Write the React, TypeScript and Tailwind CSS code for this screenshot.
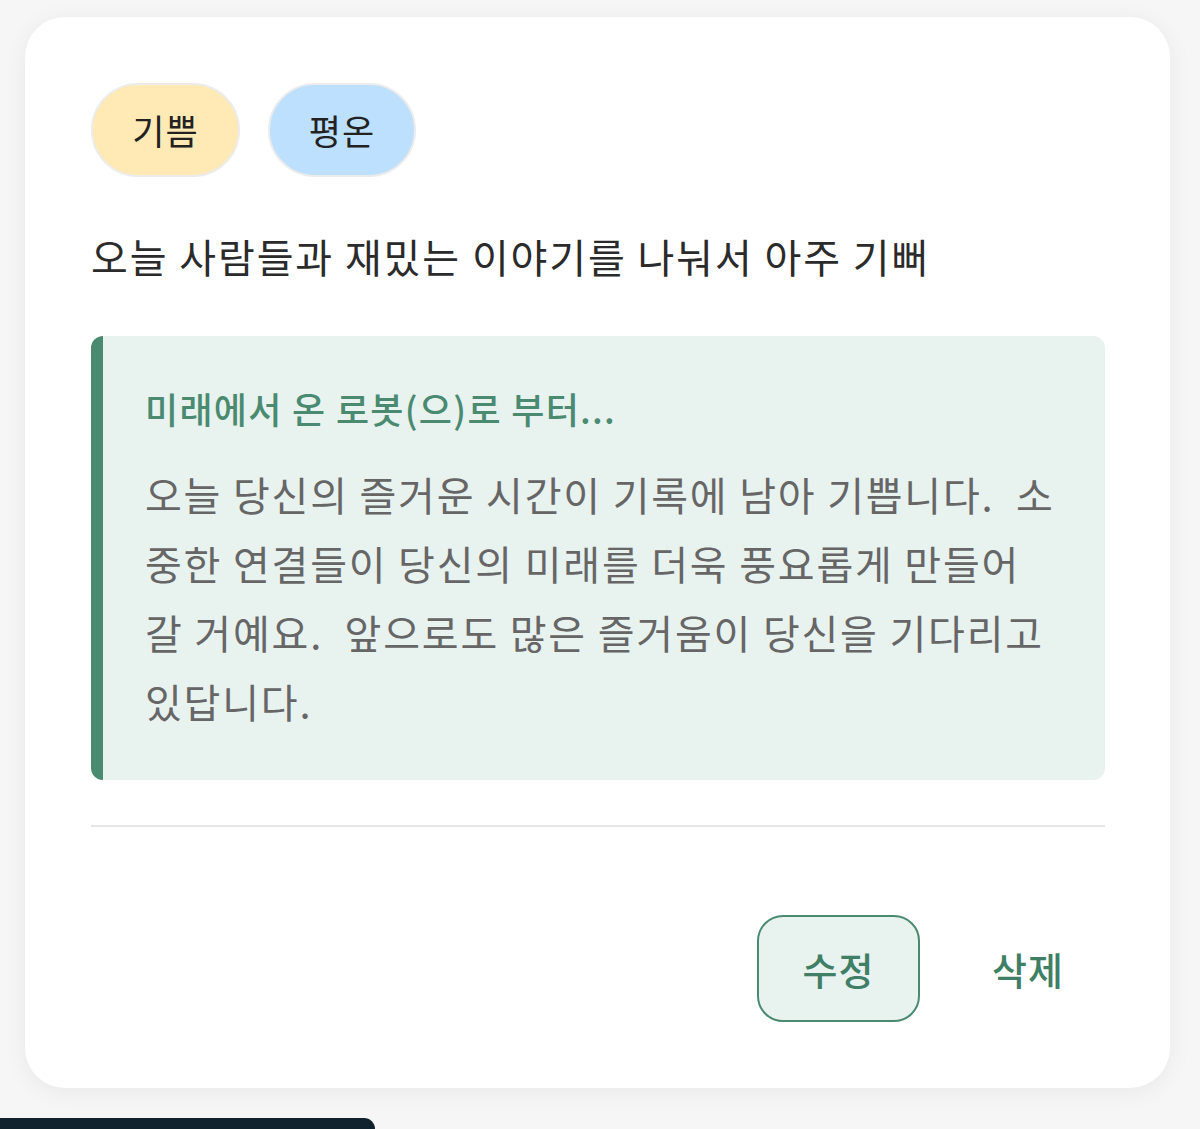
import React from "react";

export default function App() {
  const font = { fontFamily: '"Noto Sans CJK KR", "Noto Sans", sans-serif' };
  return (
    <div className="min-h-[1129px] w-[1200px] bg-[#f6f6f6] overflow-hidden" style={font}>
      <div className="pt-[17px] pl-[25px] pr-[30px]">
        <div className="w-[1145px] h-[1071px] rounded-[40px] bg-white shadow-[0_4px_24px_rgba(0,0,0,0.06)] p-[66px] pr-[65px] flex flex-col">
          <div className="flex gap-[28px]">
            <span className="h-[94px] w-[149px] rounded-full bg-[#ffeab5] border-2 border-[#ececec] flex items-center justify-center text-[35px] tracking-[1px] text-[#222]">
              기쁨
            </span>
            <span className="h-[94px] w-[148px] rounded-full bg-[#bde0fe] border-2 border-[#ececec] flex items-center justify-center text-[35px] tracking-[1px] text-[#222]">
              평온
            </span>
          </div>
          <p className="mt-[49px] text-[40px] leading-[60px] tracking-[1.9px] text-[#2b2b2b]">
            오늘 사람들과 재밌는 이야기를 나눠서 아주 기뻐
          </p>
          <div className="mt-[50px] rounded-[12px] bg-[#e8f2ef] border-l-[12px] border-[#4a8a70] pl-[42px] pr-[40px] pt-[45px] pb-[44px]">
            <p className="text-[36px] leading-[54px] tracking-[1.3px] font-medium text-[#4a8a70]">
              미래에서 온 로봇(으)로 부터...
            </p>
            <p className="mt-[25px] text-[40px] leading-[69px] tracking-[1.8px] text-[#666] whitespace-pre-wrap">
              {"오늘 당신의 즐거운 시간이 기록에 남아 기쁩니다.  소중한 연결들이 당신의 미래를 더욱 풍요롭게 만들어 갈 거예요.  앞으로도 많은 즐거움이 당신을 기다리고 있답니다."}
            </p>
          </div>
          <div className="mt-[45px] h-[2px] bg-[#e6e6e6]" />
          <div className="mt-[88px] flex justify-end items-center gap-[72px] pr-[41px]">
            <button className="h-[107px] w-[163px] rounded-[26px] border-2 border-[#4a8a70] bg-[#e8f2ef] text-[38px] tracking-[1px] font-medium text-[#3f7f66]">
              수정
            </button>
            <button className="text-[38px] tracking-[1px] font-medium text-[#3f7f66]">삭제</button>
          </div>
        </div>
      </div>
      <div className="mt-[30px] h-[11px] w-[375px] rounded-tr-[12px] bg-[#10222e]" />
    </div>
  );
}
